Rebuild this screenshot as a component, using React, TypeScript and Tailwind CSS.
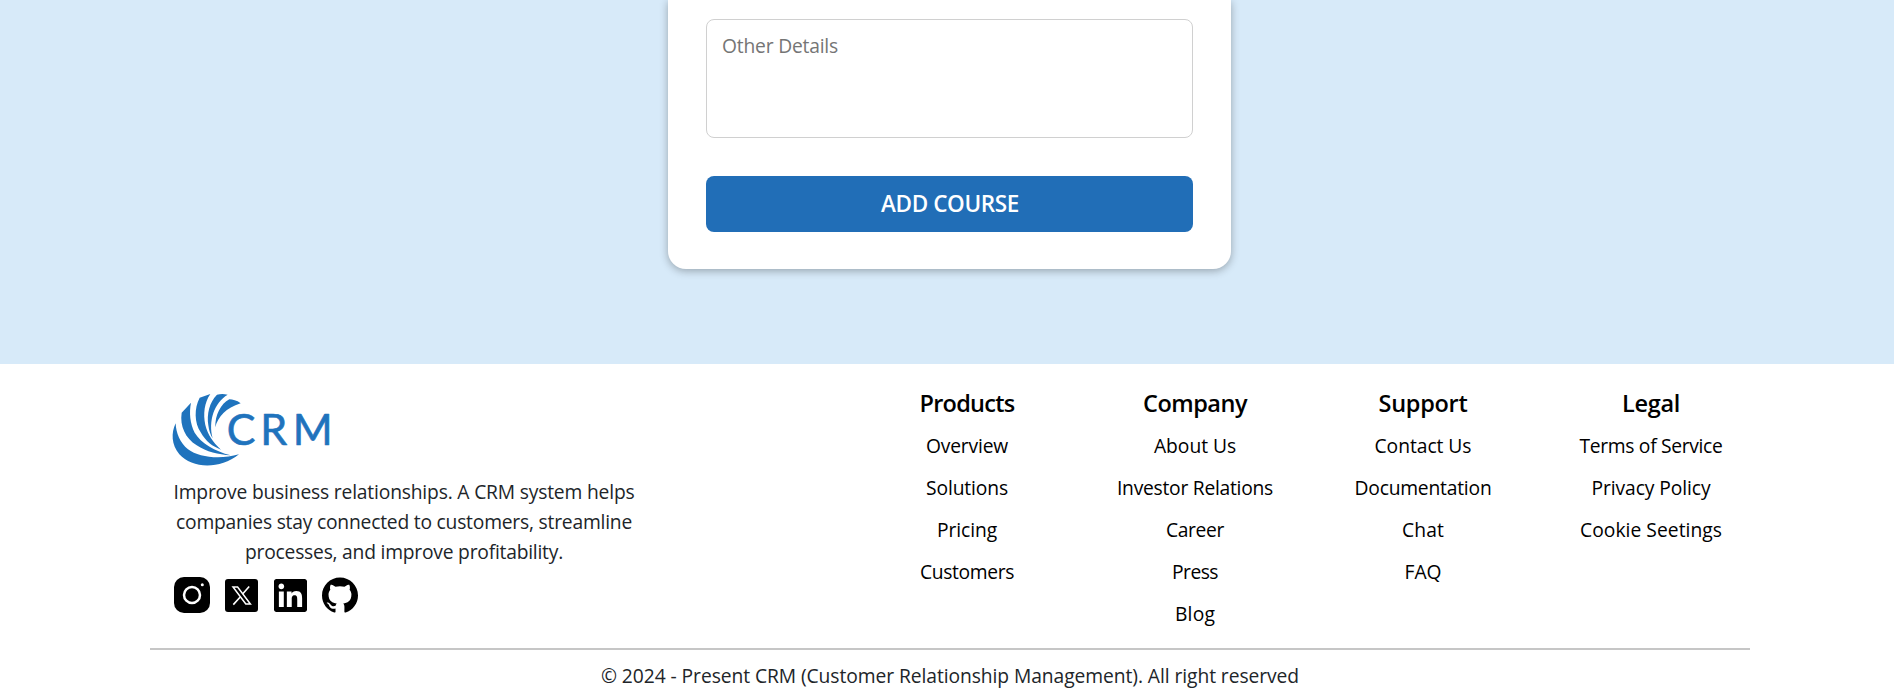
import React from "react";

const columns = [
  { title: "Products", tw: 95, links: [["Overview", 82], ["Solutions", 82], ["Pricing", 60], ["Customers", 94]] },
  { title: "Company", tw: 104, links: [["About Us", 82], ["Investor Relations", 156], ["Career", 58], ["Press", 46], ["Blog", 40]] },
  { title: "Support", tw: 89, links: [["Contact Us", 97], ["Documentation", 137], ["Chat", 42], ["FAQ", 37]] },
  { title: "Legal", tw: 58, links: [["Terms of Service", 143], ["Privacy Policy", 119], ["Cookie Seetings", 142]] },
] as { title: string; tw: number; links: [string, number][] }[];

function Logo() {
  return (
    <svg className="block h-[95px] w-[190px] text-[#1f73bd]" viewBox="0 0 570 285" fill="currentColor">
      <path d="M47 130 C33 158 34 195 58 223 C96 266 178 270 237 223 C180 240 116 232 84 208 C60 188 48 160 47 130Z" />
      <path d="M93 68 L65 98 C59 138 76 174 110 196 C140 216 175 224 212 226 C165 213 123 190 104 158 C90 130 87 98 93 68Z" />
      <path d="M151 42 L119 53 C102 85 103 128 122 157 C137 184 158 200 183 209 C158 186 143 163 136 135 C129 102 133 68 151 42Z" />
      <path d="M203 44 C190 41 180 42 171 44 C148 67 140 102 145 136 C147 152 151 164 158 175 C151 150 152 122 160 99 C168 76 183 56 203 44Z" />
      <path d="M242 70 C230 61 218 58 208 58 C182 72 165 105 166 142 C174 110 198 84 242 70Z" />
      <text x="200 301 398" y="194" fontFamily="Lato, sans-serif" fontSize="129" stroke="currentColor" strokeWidth="2" strokeLinejoin="round">CRM</text>
    </svg>
  );
}

function Instagram() {
  return (
    <svg className="h-[36px] w-[36px]" viewBox="0 0 36 36">
      <rect width="36" height="36" rx="10" fill="#000" />
      <circle cx="18" cy="18" r="8" fill="none" stroke="#fff" strokeWidth="2.5" />
      <circle cx="28.3" cy="7.7" r="1.5" fill="#fff" />
    </svg>
  );
}

function XLogo() {
  return (
    <svg className="h-[33px] w-[33px]" viewBox="0 0 33 33">
      <rect width="33" height="33" rx="3" fill="#000" />
      <path d="M8 8h4.6l12.8 17h-4.6z" fill="none" stroke="#fff" strokeWidth="1.5" />
      <path d="M24.2 7.5 17.6 15M15 18.2 8.3 25.6" stroke="#fff" strokeWidth="1.6" />
    </svg>
  );
}

function LinkedIn() {
  return (
    <svg className="h-[33px] w-[33px]" viewBox="0 0 24 24">
      <path d="M20.447 20.452h-3.554v-5.569c0-1.328-.027-3.037-1.852-3.037-1.853 0-2.136 1.445-2.136 2.939v5.667H9.351V9h3.414v1.561h.046c.477-.9 1.637-1.85 3.37-1.85 3.601 0 4.267 2.37 4.267 5.455v6.286zM5.337 7.433c-1.144 0-2.063-.926-2.063-2.065 0-1.138.92-2.063 2.063-2.063 1.14 0 2.064.925 2.064 2.063 0 1.139-.925 2.065-2.064 2.065zm1.782 13.019H3.555V9h3.564v11.452zM22.225 0H1.771C.792 0 0 .774 0 1.729v20.542C0 23.227.792 24 1.771 24h20.451C23.2 24 24 23.227 24 22.271V1.729C24 .774 23.2 0 22.222 0h.003z" />
    </svg>
  );
}

function GitHub() {
  return (
    <svg className="h-[36px] w-[36px]" viewBox="0 0 24 24">
      <path d="M12 .297c-6.63 0-12 5.373-12 12 0 5.303 3.438 9.8 8.205 11.385.6.113.82-.258.82-.577 0-.285-.01-1.04-.015-2.04-3.338.724-4.042-1.61-4.042-1.61C4.422 18.07 3.633 17.7 3.633 17.7c-1.087-.744.084-.729.084-.729 1.205.084 1.838 1.236 1.838 1.236 1.07 1.835 2.809 1.305 3.495.998.108-.776.417-1.305.76-1.605-2.665-.3-5.466-1.332-5.466-5.93 0-1.31.465-2.38 1.235-3.22-.135-.303-.54-1.523.105-3.176 0 0 1.005-.322 3.3 1.23.96-.267 1.98-.399 3-.405 1.02.006 2.04.138 3 .405 2.28-1.552 3.285-1.23 3.285-1.23.645 1.653.24 2.873.12 3.176.765.84 1.23 1.91 1.23 3.22 0 4.61-2.805 5.625-5.475 5.92.42.36.81 1.096.81 2.22 0 1.606-.015 2.896-.015 3.286 0 .315.21.69.825.57C20.565 22.092 24 17.592 24 12.297c0-6.627-5.373-12-12-12" />
    </svg>
  );
}

/* Text fitted to a given advance width by evenly adjusting letter spacing. */
function Fit({ text, width, className = "" }: { text: string; width: number; className?: string }) {
  const ref = React.useRef<HTMLSpanElement>(null);
  const [spacing, setSpacing] = React.useState(0);
  React.useLayoutEffect(() => {
    if (ref.current) setSpacing((width - ref.current.getBoundingClientRect().width) / text.length);
  }, [text, width]);
  return (
    <span ref={ref} className={"whitespace-nowrap " + className} style={{ letterSpacing: spacing }}>
      {text}
    </span>
  );
}

export default function App() {
  return (
    <div className="h-[692px] w-full overflow-hidden bg-white font-['Open_Sans','Noto_Sans',sans-serif] text-[19.25px] text-black">
      <main className="h-[364px] bg-[#d7eaf9] pl-[668px]">
        <form className="flex h-[269px] w-[563px] flex-col gap-[38px] rounded-b-[18px] bg-white px-[38px] pt-[19px] shadow-[0_2px_8px_rgba(0,0,0,0.3)]">
          <div className="h-[119px] shrink-0 rounded-[8px] border border-[#d0d0d0] px-[15px] pt-[12px] leading-[28px] text-[#757575]">
            <Fit text="Other Details" width={116} />
          </div>
          <button type="button" className="h-[56px] shrink-0 rounded-[8px] bg-[#216eb7] pl-px text-[22.5px] font-semibold leading-[56px] text-white">
            <Fit text="ADD COURSE" width={138} />
          </button>
        </form>
      </main>

      <footer>
        <div className="flex h-[284px]">
          <div className="w-[853px] shrink-0 pl-[160px] pt-[16px]">
            <Logo />
            <div className="ml-[13px] mt-[2px] flex w-[462px] flex-col items-center leading-[30px] text-[#212529]">
              <Fit text="Improve business relationships. A CRM system helps" width={461} />
              <Fit text="companies stay connected to customers, streamline" width={456} />
              <Fit text="processes, and improve profitability." width={318} />
            </div>
            <div className="ml-[14px] mt-[10px] flex h-[36px] items-center">
              <Instagram />
              <div className="ml-[15px]"><XLogo /></div>
              <div className="ml-[16px]"><LinkedIn /></div>
              <div className="ml-[15px]"><GitHub /></div>
            </div>
          </div>
          <div className="grid shrink-0 grid-cols-[228px_228px_228px_228px] pt-[19px]">
            {columns.map((c) => (
              <div key={c.title} className="flex flex-col items-center">
                <h3 className="h-[42px] text-[23.5px] font-semibold leading-[40px]">
                  <Fit text={c.title} width={c.tw} />
                </h3>
                {c.links.map(([label, w]) => (
                  <a key={label} className="h-[42px] leading-[42px]">
                    <Fit text={label} width={w} />
                  </a>
                ))}
              </div>
            ))}
          </div>
        </div>
        <div className="ml-[150px] flex h-[44px] w-[1600px] justify-center border-t-2 border-[#c6c6c6] pt-[11px] leading-[30px] text-[#212529]">
          <Fit text="© 2024 - Present CRM (Customer Relationship Management). All right reserved" width={698} />
        </div>
      </footer>
    </div>
  );
}
